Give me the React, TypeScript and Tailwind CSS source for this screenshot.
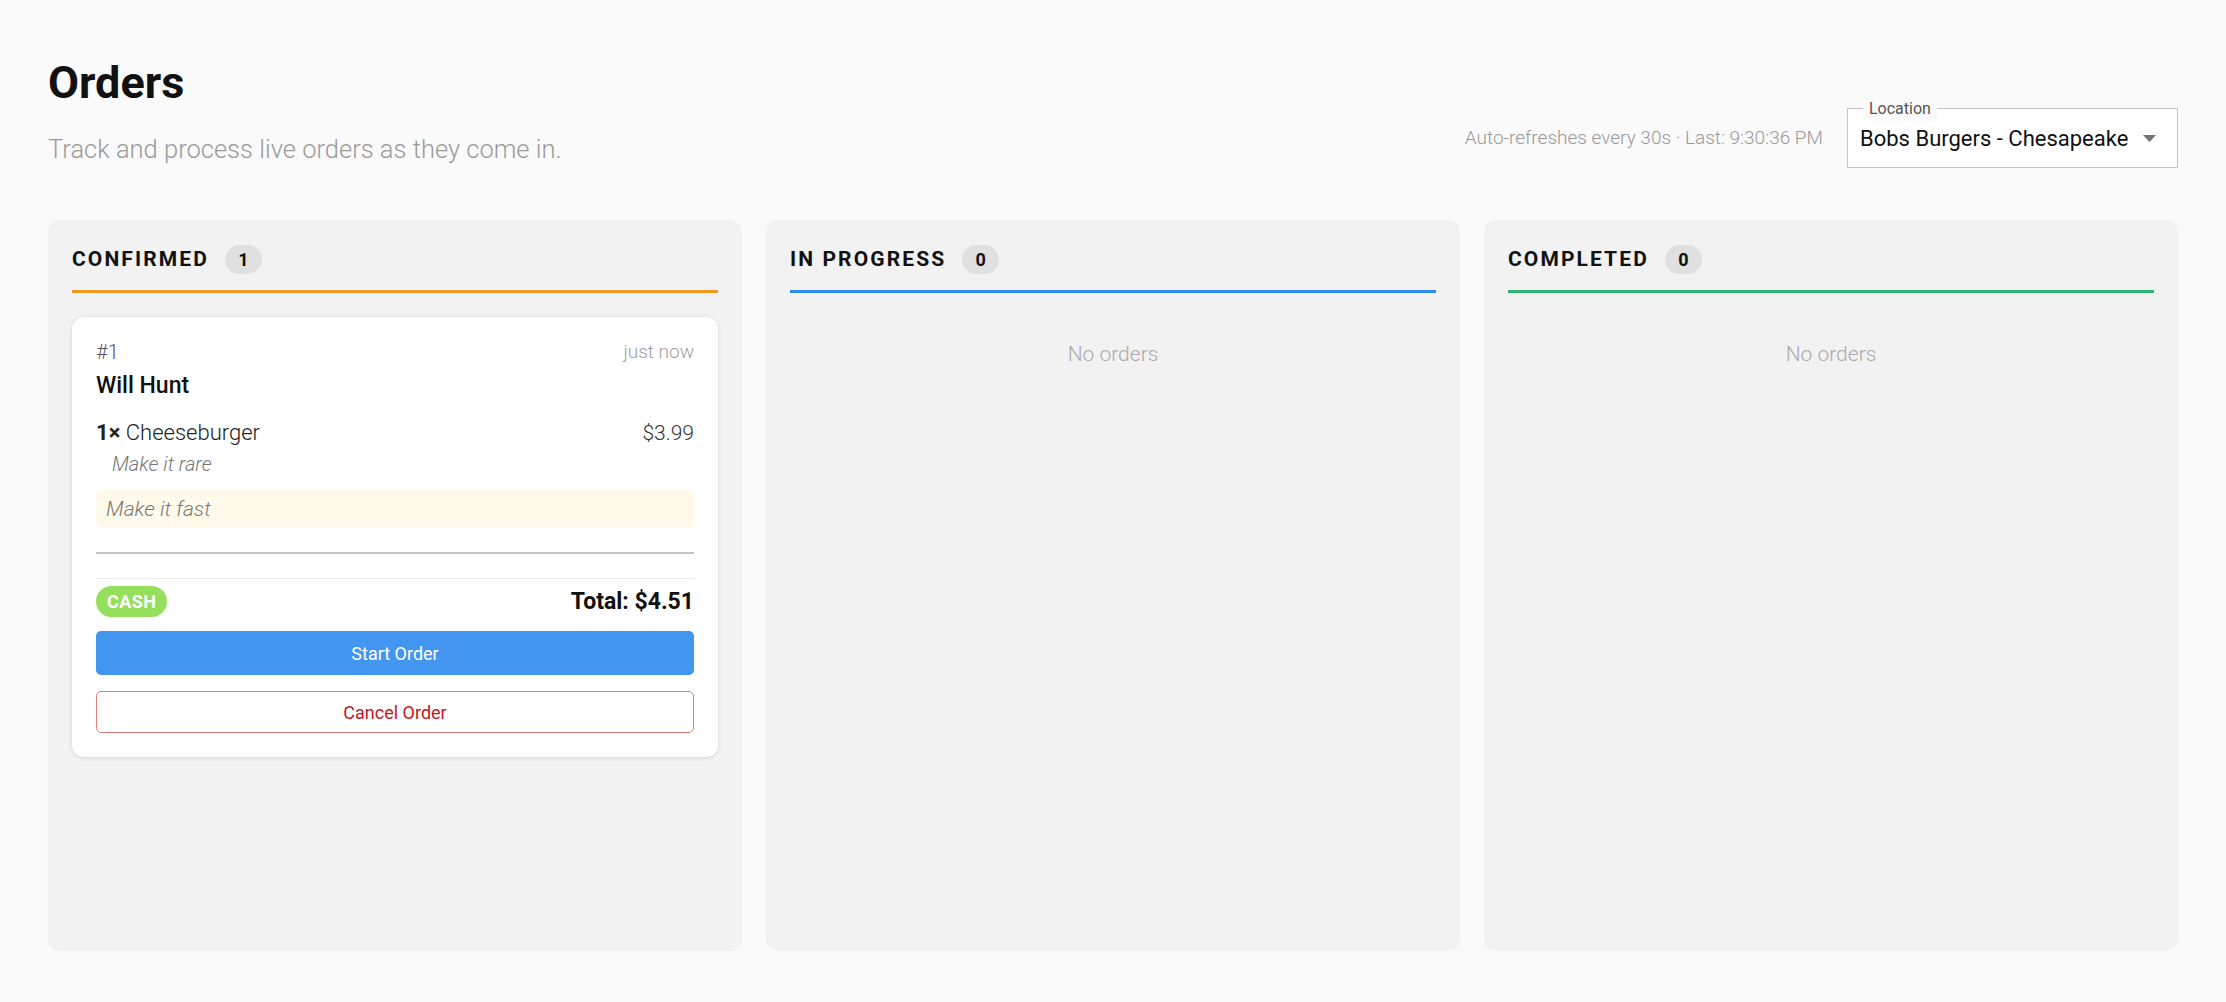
type Item = { qty: number; name: string; price: string; note?: string }
type Order = {
  id: number
  customer: string
  when: string
  items: Item[]
  note?: string
  payment: string
  total: string
}

const columns = [
  { key: 'confirmed', title: 'CONFIRMED', bar: 'bg-[#f39a1e]' },
  { key: 'progress', title: 'IN PROGRESS', bar: 'bg-[#2e8ef0]' },
  { key: 'completed', title: 'COMPLETED', bar: 'bg-[#2db473]' },
]

const orders: Record<string, Order[]> = {
  confirmed: [
    {
      id: 1,
      customer: 'Will Hunt',
      when: 'just now',
      items: [{ qty: 1, name: 'Cheeseburger', price: '$3.99', note: 'Make it rare' }],
      note: 'Make it fast',
      payment: 'CASH',
      total: '$4.51',
    },
  ],
  progress: [],
  completed: [],
}

function OrderCard({ order }: { order: Order }) {
  return (
    <div className="rounded-xl bg-white px-6 pt-5 pb-6 shadow-[0_1px_4px_rgba(0,0,0,0.12)]">
      <div className="flex items-center justify-between leading-[30px]">
        <span className="text-[20px] font-light text-[#555]">#{order.id}</span>
        <span className="text-[19px] font-light text-[#9e9e9e]">{order.when}</span>
      </div>
      <div className="mt-[3px] text-[23px] leading-[31px] font-medium text-[#111]">{order.customer}</div>

      <div className="mt-4">
        {order.items.map((item) => (
          <div key={item.name}>
            <div className="flex items-center justify-between text-[22px] leading-[32px]">
              <span className="text-[#222]">
                <span className="font-bold">{item.qty}×</span> <span className="font-light">{item.name}</span>
              </span>
              <span className="text-[21px] font-light text-[#333]">{item.price}</span>
            </div>
            {item.note && (
              <div className="mt-0.5 pl-4 text-[20px] leading-[27px] font-light italic text-[#777]">{item.note}</div>
            )}
          </div>
        ))}
      </div>

      {order.note && (
        <div className="mt-3 rounded-md bg-[#fffaea] px-2.5 py-1 text-[21px] leading-[30px] font-light italic text-[#777]">
          {order.note}
        </div>
      )}

      <div className="mt-6 h-[2px] bg-[#c4c4c4]" />
      <div className="mt-6 h-px bg-[#eaeaea]" />

      <div className="mt-[6px] flex items-center justify-between">
        <span className="rounded-full bg-[#94e05c] px-[11px] py-0.5 text-[18px] font-bold tracking-wide text-white">
          {order.payment}
        </span>
        <span className="text-[23px] font-bold text-[#111]">Total: {order.total}</span>
      </div>

      <button className="mt-3 flex h-[44px] w-full items-center justify-center rounded-[5px] bg-[#4396f0] text-[18px] font-normal text-white">
        Start Order
      </button>
      <button className="mt-4 flex h-[42px] w-full items-center justify-center rounded-[5px] border border-[#e57f7f] bg-white text-[18px] font-normal text-[#c4161c]">
        Cancel Order
      </button>
    </div>
  )
}

export default function App() {
  return (
    <div className="min-h-screen bg-[#fafafa] px-12 pt-[55px] pb-[51px] font-['Roboto',sans-serif]">
      <div className="flex items-end justify-between">
        <div>
          <h1 className="text-[45px] leading-[56px] font-bold text-[#111]">Orders</h1>
          <p className="mt-[19px] text-[25.5px] leading-[38px] font-light text-[#9a9a9a]">
            Track and process live orders as they come in.
          </p>
        </div>
        <div className="flex items-center gap-6">
          <span className="text-[19px] font-light text-[#999]">Auto-refreshes every 30s · Last: 9:30:36 PM</span>
          <div className="relative flex h-[60px] w-[331px] items-center justify-between border border-[#c4c4c4] bg-white pr-[21px] pl-3">
            <span className="absolute -top-[12px] left-[15px] bg-[#fafafa] px-[6px] text-[16px] text-[#555]">Location</span>
            <span className="text-[22px] text-[#111]">Bobs Burgers - Chesapeake</span>
            <svg width="13" height="7" viewBox="0 0 13 7" className="fill-[#757575]">
              <path d="M0 0h13L6.5 7z" />
            </svg>
          </div>
        </div>
      </div>

      <div className="mt-[52px] grid grid-cols-3 gap-6">
        {columns.map((col) => {
          const list = orders[col.key]
          return (
            <section key={col.key} className="h-[731px] rounded-xl bg-[#f2f2f2] px-6 pt-[24px]">
              <div className="flex items-center gap-4">
                <h2 className="text-[21px] font-bold tracking-[0.1em] text-[#111]">{col.title}</h2>
                <span className="flex h-[29px] min-w-[37px] items-center justify-center rounded-full bg-[#e0e0e0] px-3 text-[18px] font-bold text-[#111]">
                  {list.length}
                </span>
              </div>
              <div className={`mt-[14px] h-[3px] ${col.bar}`} />
              {list.length === 0 ? (
                <div className="pt-[46px] text-center text-[21px] font-light text-[#aaa]">No orders</div>
              ) : (
                <div className="mt-[24px] flex flex-col gap-4">
                  {list.map((o) => (
                    <OrderCard key={o.id} order={o} />
                  ))}
                </div>
              )}
            </section>
          )
        })}
      </div>
    </div>
  )
}
